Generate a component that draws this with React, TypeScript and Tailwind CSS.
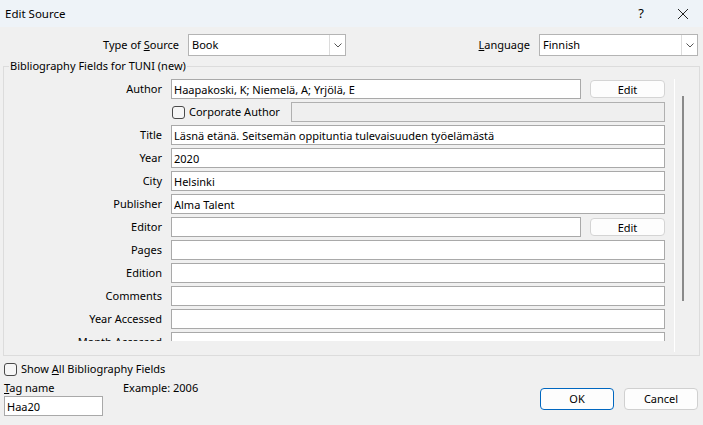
import React from 'react';

const font = { fontFamily: '"Noto Sans", "Open Sans", sans-serif' };

const Field: React.FC<{ label: string; value?: string; edit?: boolean }> = ({ label, value = '', edit }) => (
  <div className="flex items-center h-[20px]">
    <div className="w-[158px] text-right">{label}</div>
    <div className="ml-[9px] flex items-center">
      <input
        readOnly
        value={value}
        className={`h-[20px] border border-[#a9a9a9] bg-white px-[2px] outline-none text-[11px] ${edit ? 'w-[410px]' : 'w-[494px]'}`}
      />
      {edit && (
        <button className="ml-[9px] w-[75px] h-[18px] rounded-[4px] border border-[#d4d4d4] bg-[#fdfdfd] text-[11px] leading-none">Edit</button>
      )}
    </div>
  </div>
);

const Checkbox: React.FC = () => (
  <span className="inline-block w-[13px] h-[13px] rounded-[3px] border border-[#4a4a4a] bg-[#f6f6f6]" />
);

const Combo: React.FC<{ value: string; w: string }> = ({ value, w }) => (
  <div className={`flex h-[22px] border border-[#b4b4b4] bg-white ${w}`}>
    <div className="flex-1 flex items-center pl-[3px]">{value}</div>
    <div className="w-[16px] border-l border-[#dcdcdc] flex items-center justify-center">
      <svg width="8" height="5" viewBox="0 0 8 5">
        <path d="M0.5 0.5 L4 4 L7.5 0.5" fill="none" stroke="#555" strokeWidth="1" />
      </svg>
    </div>
  </div>
);

export default function App() {
  const fields: { label: string; value?: string; edit?: boolean }[] = [
    { label: 'Title', value: 'Läsnä etänä. Seitsemän oppituntia tulevaisuuden työelämästä' },
    { label: 'Year', value: '2020' },
    { label: 'City', value: 'Helsinki' },
    { label: 'Publisher', value: 'Alma Talent' },
    { label: 'Editor', edit: true },
    { label: 'Pages' },
    { label: 'Edition' },
    { label: 'Comments' },
    { label: 'Year Accessed' },
    { label: 'Month Accessed' },
  ];

  return (
    <div className="w-[703px] h-[425px] bg-[#f0f0f0] text-[11px] text-black overflow-hidden flex flex-col" style={font}>
      {/* title bar */}
      <div className="h-[27px] bg-[#eef3f8] flex items-center">
        <div className="pl-[5px] flex-1 text-[11.5px]">Edit Source</div>
        <div className="w-[20px] text-center text-[13px] mr-[26px]">?</div>
        <svg width="12" height="12" viewBox="0 0 12 12" className="mr-[14px]">
          <path d="M1 1 L11 11 M11 1 L1 11" stroke="#222" strokeWidth="1" />
        </svg>
      </div>

      {/* source + language */}
      <div className="flex items-center mt-[7px] h-[22px]">
        <div className="w-[179px] text-right">
          Type of <u>S</u>ource
        </div>
        <div className="ml-[9px]">
          <Combo value="Book" w="w-[158px]" />
        </div>
        <div className="flex-1 text-right">
          <u>L</u>anguage
        </div>
        <div className="ml-[9px] mr-[5px]">
          <Combo value="Finnish" w="w-[159px]" />
        </div>
      </div>

      {/* group box */}
      <fieldset className="mx-[3px] mt-[2px] border border-[#dcdcdc] h-[298px] px-0 pb-[4px]">
        <legend className="ml-[5px] px-[1px] leading-[16px]">Bibliography Fields for TUNI (new)</legend>
        <div className="flex mt-[5px] h-[273px]">
          <div className="w-[670px] h-[262px] overflow-hidden flex flex-col gap-[3px]">
            <Field label="Author" value="Haapakoski, K; Niemelä, A; Yrjölä, E" edit />
            <div className="flex items-center h-[20px]">
              <div className="w-[158px]" />
              <div className="ml-[10px] flex items-center">
                <Checkbox />
                <span className="ml-[4px] w-[102px]">Corporate Author</span>
                <div className="w-[374px] h-[20px] border border-[#b0b0b0] bg-[#efefef]" />
              </div>
            </div>
            {fields.map(f => (
              <Field key={f.label} {...f} />
            ))}
          </div>
          <div className="w-[1px] bg-white" />
          <div className="flex-1 pl-[7px] pt-[17px]">
            <div className="w-[2px] h-[205px] bg-[#8a8a8a]" />
          </div>
        </div>
      </fieldset>

      {/* bottom */}
      <div className="flex px-[4px] mt-[6px]">
        <div className="flex flex-col">
          <div className="flex items-center h-[14px]">
            <Checkbox />
            <span className="ml-[4px]">
              Show <u>A</u>ll Bibliography Fields
            </span>
          </div>
          <div className="flex mt-[5px] leading-[14px]">
            <span className="w-[119px]">
              <u>T</u>ag name
            </span>
            <span>Example: 2006</span>
          </div>
          <input
            readOnly
            value="Haa20"
            className="mt-[1px] w-[99px] h-[20px] border border-[#a9a9a9] bg-white px-[2px] outline-none text-[11px]"
          />
        </div>
        <div className="flex-1 flex justify-end items-start pt-[26px] gap-[10px] pr-[1px]">
          <button className="w-[74px] h-[22px] rounded-[4px] border border-[#0067c0] bg-[#fdfdfd] text-[11px]">OK</button>
          <button className="w-[74px] h-[22px] rounded-[4px] border border-[#d0d0d0] bg-[#fdfdfd] text-[11px]">Cancel</button>
        </div>
      </div>
    </div>
  );
}
